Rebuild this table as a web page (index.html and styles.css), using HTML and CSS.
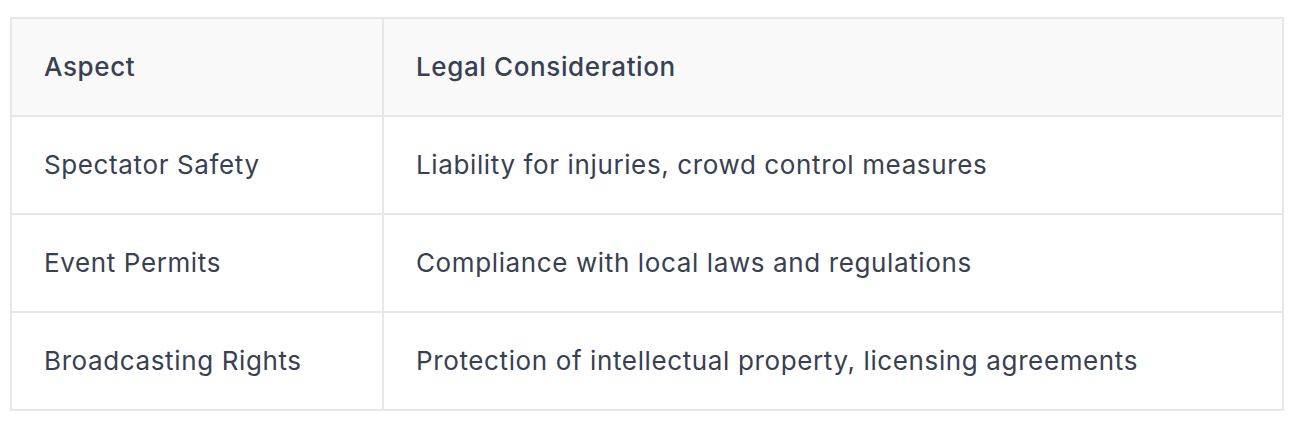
FILE: index.html
```html
<!DOCTYPE html>
<html>
<head>
<meta charset="utf-8">
<link rel="stylesheet" href="styles.css">
</head>
<body>
<table class="legal-table">
  <thead>
    <tr><th class="col-aspect">Aspect</th><th>Legal Consideration</th></tr>
  </thead>
  <tbody>
    <tr><td>Spectator Safety</td><td>Liability for injuries, crowd control measures</td></tr>
    <tr><td>Event Permits</td><td>Compliance with local laws and regulations</td></tr>
    <tr><td>Broadcasting Rights</td><td>Protection of intellectual property, licensing agreements</td></tr>
  </tbody>
</table>
</body>
</html>
```
FILE: styles.css
```css
html, body {
  margin: 0;
  padding: 0;
  background: #ffffff;
}
body {
  padding: 17px 0 0 10px;
  font-family: Inter, "Noto Sans", sans-serif;
  color: #374151;
}
.legal-table {
  width: 1274px;
  border-collapse: collapse;
  border: 2px solid #e5e7eb;
  font-size: 26px;
  letter-spacing: 0.62px;
}
.legal-table th,
.legal-table td {
  border: 2px solid #e5e7eb;
  text-align: left;
  padding: 0 32px;
  height: 96px;
  line-height: 36px;
  vertical-align: middle;
}
.legal-table th {
  background: #f9f9f9;
  font-weight: 500;
}
.legal-table td {
  font-weight: 400;
}
.col-aspect {
  width: 306px;
}
```
